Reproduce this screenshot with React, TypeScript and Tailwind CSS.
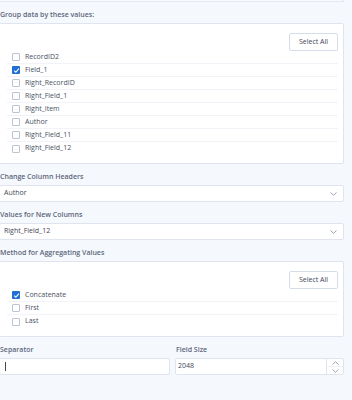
import React from 'react';

const groupFields = ['RecordID2', 'Field_1', 'Right_RecordID', 'Right_Field_1', 'Right_Item', 'Author', 'Right_Field_11', 'Right_Field_12'];
const methods = ['Concatenate', 'First', 'Last'];

function Check({ on }: { on: boolean }) {
  if (on) {
    return (
      <span className="flex h-[8px] w-[8px] items-center justify-center rounded-[1px] bg-[#1f6fd6]">
        <svg width="7" height="7" viewBox="0 0 8 8" fill="none">
          <path d="M1.3 4.2 L3.2 6 L6.8 1.8" stroke="#fff" strokeWidth="1.3" />
        </svg>
      </span>
    );
  }
  return <span className="h-[8px] w-[8px] rounded-[1px] border border-[#bcc4d2] bg-white" />;
}

function Chevron({ up = false }: { up?: boolean }) {
  return (
    <svg width="7" height="4" viewBox="0 0 7 4" fill="none" className={up ? 'rotate-180' : ''}>
      <path d="M0.5 0.5 L3.5 3.3 L6.5 0.5" stroke="#8f99ad" strokeWidth="0.9" />
    </svg>
  );
}

function Label({ children }: { children: React.ReactNode }) {
  return <div className="pl-px pt-[7px] pb-[2px] text-[7px] leading-[12px] font-semibold text-[#5c667a]">{children}</div>;
}

function CheckList({ items, checked }: { items: string[]; checked: string[] }) {
  return (
    <div className="rounded-[2px] border border-[#dfe4ee] bg-white pt-[9px] pb-[8px] pl-[7px] pr-[5px]">
      <div className="flex justify-end">
        <button className="h-[18px] w-[49px] rounded-[2px] border border-[#d6dce8] bg-white text-[7px] text-[#3f4656]">Select All</button>
      </div>
      {items.map((f, i) => (
        <div key={f} className={`flex h-[13px] items-center gap-[5px] pl-[5px] ${i < items.length - 1 ? 'border-b border-[#f1f3f8]' : ''}`}>
          <Check on={checked.includes(f)} />
          <span className="text-[7px] text-[#4a5263]">{f}</span>
        </div>
      ))}
    </div>
  );
}

function Select({ value }: { value: string }) {
  return (
    <div className="flex h-[17px] items-center justify-between rounded-[2px] border border-[#dfe4ee] bg-white pl-[4px] pr-[6px]">
      <span className="text-[7px] text-[#3f4656]">{value}</span>
      <Chevron />
    </div>
  );
}

export default function App() {
  return (
    <div className="h-[400px] w-[352px] overflow-hidden bg-[#f5f8fd]" style={{ fontFamily: '"Open Sans", "Noto Sans", sans-serif' }}>
      <div className="-ml-px w-[345px]">
        <div className="h-[2px] border-r border-b border-[#e3e8f1] bg-[#f8fafd]" />
        <Label>Group data by these values:</Label>
        <CheckList items={groupFields} checked={['Field_1']} />

        <Label>Change Column Headers</Label>
        <Select value="Author" />

        <Label>Values for New Columns</Label>
        <Select value="Right_Field_12" />

        <Label>Method for Aggregating Values</Label>
        <CheckList items={methods} checked={['Concatenate']} />

        <div className="flex gap-[5px]">
          <div className="w-[171px]">
            <Label>Separator</Label>
            <div className="flex h-[17px] items-center rounded-[2px] border border-[#dfe4ee] bg-white pl-[5px]">
              <span className="h-[9px] w-px bg-[#3f4656]" />
            </div>
          </div>
          <div className="flex-1">
            <Label>Field Size</Label>
            <div className="flex h-[17px] items-stretch rounded-[2px] border border-[#dfe4ee] bg-white">
              <span className="flex flex-1 items-center pl-[2px] text-[7px] text-[#3f4656]">2048</span>
              <div className="flex w-[17px] flex-col border-l border-[#dfe4ee]">
                <div className="flex flex-1 items-center justify-center border-b border-[#eef1f6]"><Chevron up /></div>
                <div className="flex flex-1 items-center justify-center"><Chevron /></div>
              </div>
            </div>
          </div>
        </div>
      </div>
    </div>
  );
}
